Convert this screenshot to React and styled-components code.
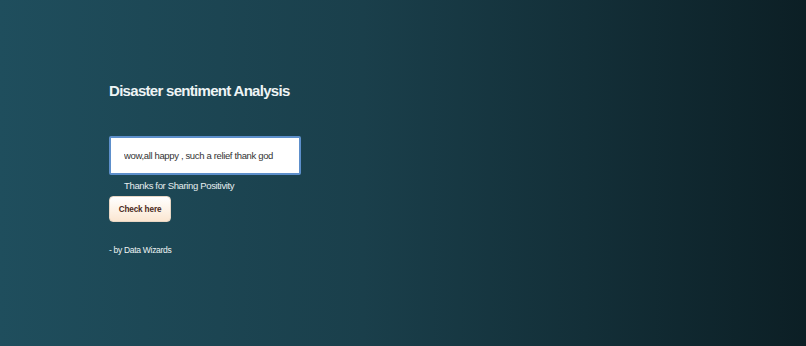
import React from "react";
import styled, { createGlobalStyle } from "styled-components";

const GlobalStyle = createGlobalStyle`
  html, body {
    margin: 0;
    padding: 0;
  }
  body {
    font-family: "Liberation Sans", Arial, sans-serif;
  }
`;

const Page = styled.main`
  min-height: 346px;
  box-sizing: border-box;
  padding: 82px 0 0 109px;
  background: linear-gradient(90deg, #1f4e5d 0%, #1a3f4b 45%, #0c1f25 100%);
  display: flex;
  flex-direction: column;
  align-items: flex-start;
`;

const Title = styled.h1`
  margin: 0;
  font-size: 15px;
  line-height: 18px;
  font-weight: 700;
  letter-spacing: -0.7px;
  color: #eef4f5;
`;

const Form = styled.form`
  margin-top: 36px;
  display: flex;
  flex-direction: column;
  align-items: flex-start;
`;

const TextInput = styled.input`
  box-sizing: border-box;
  width: 192px;
  height: 39px;
  padding: 0 0 0 13px;
  border: 2px solid #5d8fcb;
  border-radius: 2px;
  background: #ffffff;
  font-family: "Liberation Sans", Arial, sans-serif;
  font-size: 9.5px;
  letter-spacing: -0.35px;
  color: #333;
  caret-color: #222;
  outline: none;
`;

const Result = styled.p`
  margin: 5px 0 0 15px;
  font-size: 9.5px;
  line-height: 12px;
  letter-spacing: -0.35px;
  color: #e6eef0;
`;

const CheckButton = styled.button`
  margin-top: 4px;
  width: 62px;
  height: 26px;
  border: 1px solid #e8d6c4;
  border-radius: 4px;
  background: linear-gradient(180deg, #ffffff 0%, #fdf1e4 60%, #fbe6d1 100%);
  font-family: "Liberation Sans", Arial, sans-serif;
  font-size: 8.2px;
  font-weight: 700;
  letter-spacing: -0.15px;
  color: #4a2a1c;
  cursor: pointer;
`;

const Credit = styled.p`
  margin: 23px 0 0;
  font-size: 8.5px;
  line-height: 10px;
  letter-spacing: -0.3px;
  color: #eef4f5;
`;

export default function App() {
  return (
    <>
      <GlobalStyle />
      <Page>
        <Title>Disaster sentiment Analysis</Title>
        <Form onSubmit={(e) => e.preventDefault()}>
          <TextInput
            type="text"
            autoFocus
            defaultValue="wow,all happy , such a relief thank god"
          />
          <Result>Thanks for Sharing Positivity</Result>
          <CheckButton type="submit">Check here</CheckButton>
        </Form>
        <Credit>- by Data Wizards</Credit>
      </Page>
    </>
  );
}
